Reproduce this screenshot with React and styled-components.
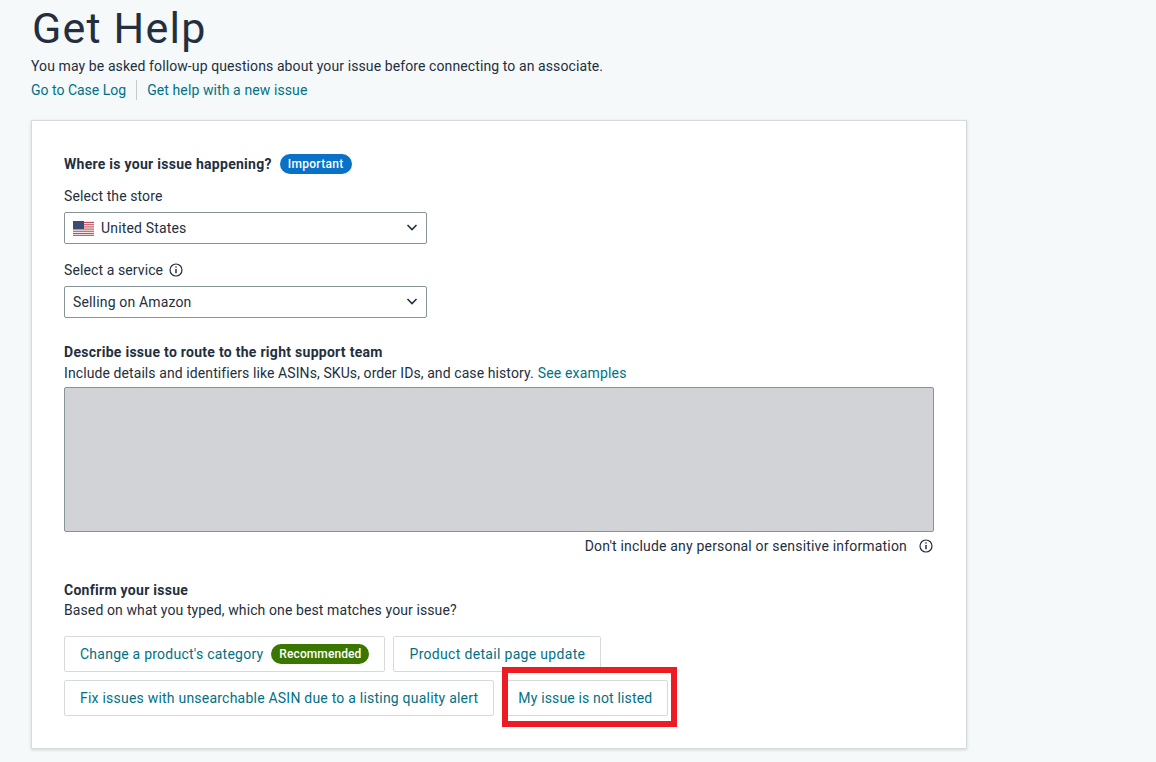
import React from "react";
import styled, { createGlobalStyle } from "styled-components";

const Global = createGlobalStyle`
  html, body { margin: 0; padding: 0; background: #f5f9fa; }
  body { font-family: Roboto, "Liberation Sans", sans-serif; font-size: 14px; line-height: 20px; color: #232f3e; letter-spacing: .1px; }
`;

const Page = styled.div`
  width: 1156px; height: 762px; overflow: hidden; padding: 0 0 0 31px; box-sizing: border-box;
`;
const Title = styled.h1`
  margin: 0; font-size: 43px; line-height: 56px; font-weight: 400; color: #232f3e; padding-left: 1px; letter-spacing: 1.2px;
`;
const Intro = styled.p`margin: 0; height: 20px; color: #232f3e;`;
const LinkRow = styled.div`display: flex; align-items: center; margin-top: 4px; height: 20px;`;
const Link = styled.a`color: #007185; text-decoration: none; letter-spacing: ${p => p.$track ?? 0.1}px;`;
const Divider = styled.span`width: 1px; height: 20px; background: #c5cbcc; margin: 0 10px;`;
const Card = styled.main`
  position: relative; width: 936px; height: 629px; box-sizing: border-box; margin-top: 20px;
  padding: 32px 32px 0; background: #fff; border: 1px solid #d5dbdb;
  box-shadow: 0 1px 3px rgba(0,0,0,.15);
`;
const HeadRow = styled.div`display: flex; align-items: center; height: 22px; gap: 8px;`;
const Strong = styled.div`font-weight: 700; color: #232f3e; letter-spacing: .28px;`;
const Pill = styled.span`
  display: inline-flex; align-items: center; height: 20px; padding: 0 8px; border-radius: 10px;
  font-size: 12px; font-weight: 500; color: #fff; background: ${p => p.$bg}; letter-spacing: ${p => p.$track}px;
`;
const Label = styled.div`display: flex; align-items: center; gap: 6px; height: 20px; margin-top: ${p => p.$top}px;`;
const Select = styled.div`
  display: flex; align-items: center; gap: 7px; box-sizing: border-box; width: 363px; height: 32px; margin-top: 6px; padding: 0 8px 0 8px;
  background: #fff; border: 1px solid #879596; border-radius: 2px; color: #232f3e;
`;
const SelectText = styled.span`flex: 1; letter-spacing: .16px;`;
const DescBlock = styled.div`margin-top: 24px;`;
const HelpRow = styled.div`display: flex; align-items: center; gap: 4px; height: 20px; margin-top: 1px; letter-spacing: .09px;`;
const Blank = styled.div`
  height: 145px; box-sizing: border-box; margin-top: 4px; background: #d2d3d6;
  border: 1px solid #879596; border-radius: 2px;
`;
const Note = styled.div`
  display: flex; justify-content: flex-end; align-items: center; gap: 12px; height: 20px; margin-top: 4px; padding-right: 1px; letter-spacing: .18px;
`;
const ConfirmBlock = styled.div`margin-top: 24px;`;
const Options = styled.div`display: flex; flex-direction: column; gap: 8px; margin-top: 16px;`;
const OptionRow = styled.div`display: flex; gap: 8px;`;
const Option = styled.button`
  display: flex; align-items: center; gap: 8px; height: 36px; padding: 0 15px; box-sizing: border-box;
  background: #fff; border: 1px solid #d5dbdb; border-radius: 2px; color: #007185;
  font: inherit; letter-spacing: ${p => p.$track}px;
`;
const Highlight = styled.div`
  position: absolute; left: 470px; top: 546px; width: 175px; height: 60px; box-sizing: border-box;
  border: 6px solid #ed1c24;
`;

const Chevron = () => (
  <svg width="12" height="12" viewBox="0 0 12 12" fill="none" stroke="#232f3e" strokeWidth="1.6">
    <path d="M1.5 3 6 7.5 10.5 3" />
  </svg>
);
const Info = () => (
  <svg width="14" height="14" viewBox="0 0 14 14" fill="none" stroke="#232f3e" strokeWidth="1.2">
    <circle cx="7" cy="7" r="6" />
    <path d="M7 6v4.2" strokeWidth="1.5" />
    <circle cx="7" cy="4" r=".8" fill="#232f3e" stroke="none" />
  </svg>
);
const Flag = () => (
  <svg width="21" height="15" viewBox="0 0 21 15">
    <rect width="21" height="15" fill="#f3e6e6" />
    {[1, 3.2, 5.4, 7.6, 9.8, 12, 13.9].map(y => <rect key={y} y={y} width="21" height="1" fill="#c0505c" />)}
    <rect width="11" height="8" fill="#3d4a72" />
  </svg>
);

export default function App() {
  return (
    <Page>
      <Global />
      <Title>Get Help</Title>
      <Intro>You may be asked follow-up questions about your issue before connecting to an associate.</Intro>
      <LinkRow>
        <Link $track={0}>Go to Case Log</Link>
        <Divider />
        <Link>Get help with a new issue</Link>
      </LinkRow>
      <Card>
        <HeadRow>
          <Strong>Where is your issue happening?</Strong>
          <Pill $bg="#0972c6" $track={0.3}>Important</Pill>
        </HeadRow>
        <Label $top={11}>Select the store</Label>
        <Select><Flag /><SelectText>United States</SelectText><Chevron /></Select>
        <Label $top={16}>Select a service <Info /></Label>
        <Select><SelectText>Selling on Amazon</SelectText><Chevron /></Select>
        <DescBlock>
          <Strong>Describe issue to route to the right support team</Strong>
          <HelpRow>Include details and identifiers like ASINs, SKUs, order IDs, and case history. <Link $track={0.17}>See examples</Link></HelpRow>
          <Blank />
        </DescBlock>
        <Note>Don't include any personal or sensitive information <Info /></Note>
        <ConfirmBlock>
          <Strong>Confirm your issue</Strong>
          <div>Based on what you typed, which one best matches your issue?</div>
          <Options>
            <OptionRow>
              <Option $track={0.24}>Change a product's category <Pill $bg="#3b7600" $track={0.1}>Recommended</Pill></Option>
              <Option $track={0.32}>Product detail page update</Option>
            </OptionRow>
            <OptionRow>
              <Option $track={0.22}>Fix issues with unsearchable ASIN due to a listing quality alert</Option>
              <Option $track={0.15}>My issue is not listed</Option>
            </OptionRow>
          </Options>
        </ConfirmBlock>
        <Highlight />
      </Card>
    </Page>
  );
}
